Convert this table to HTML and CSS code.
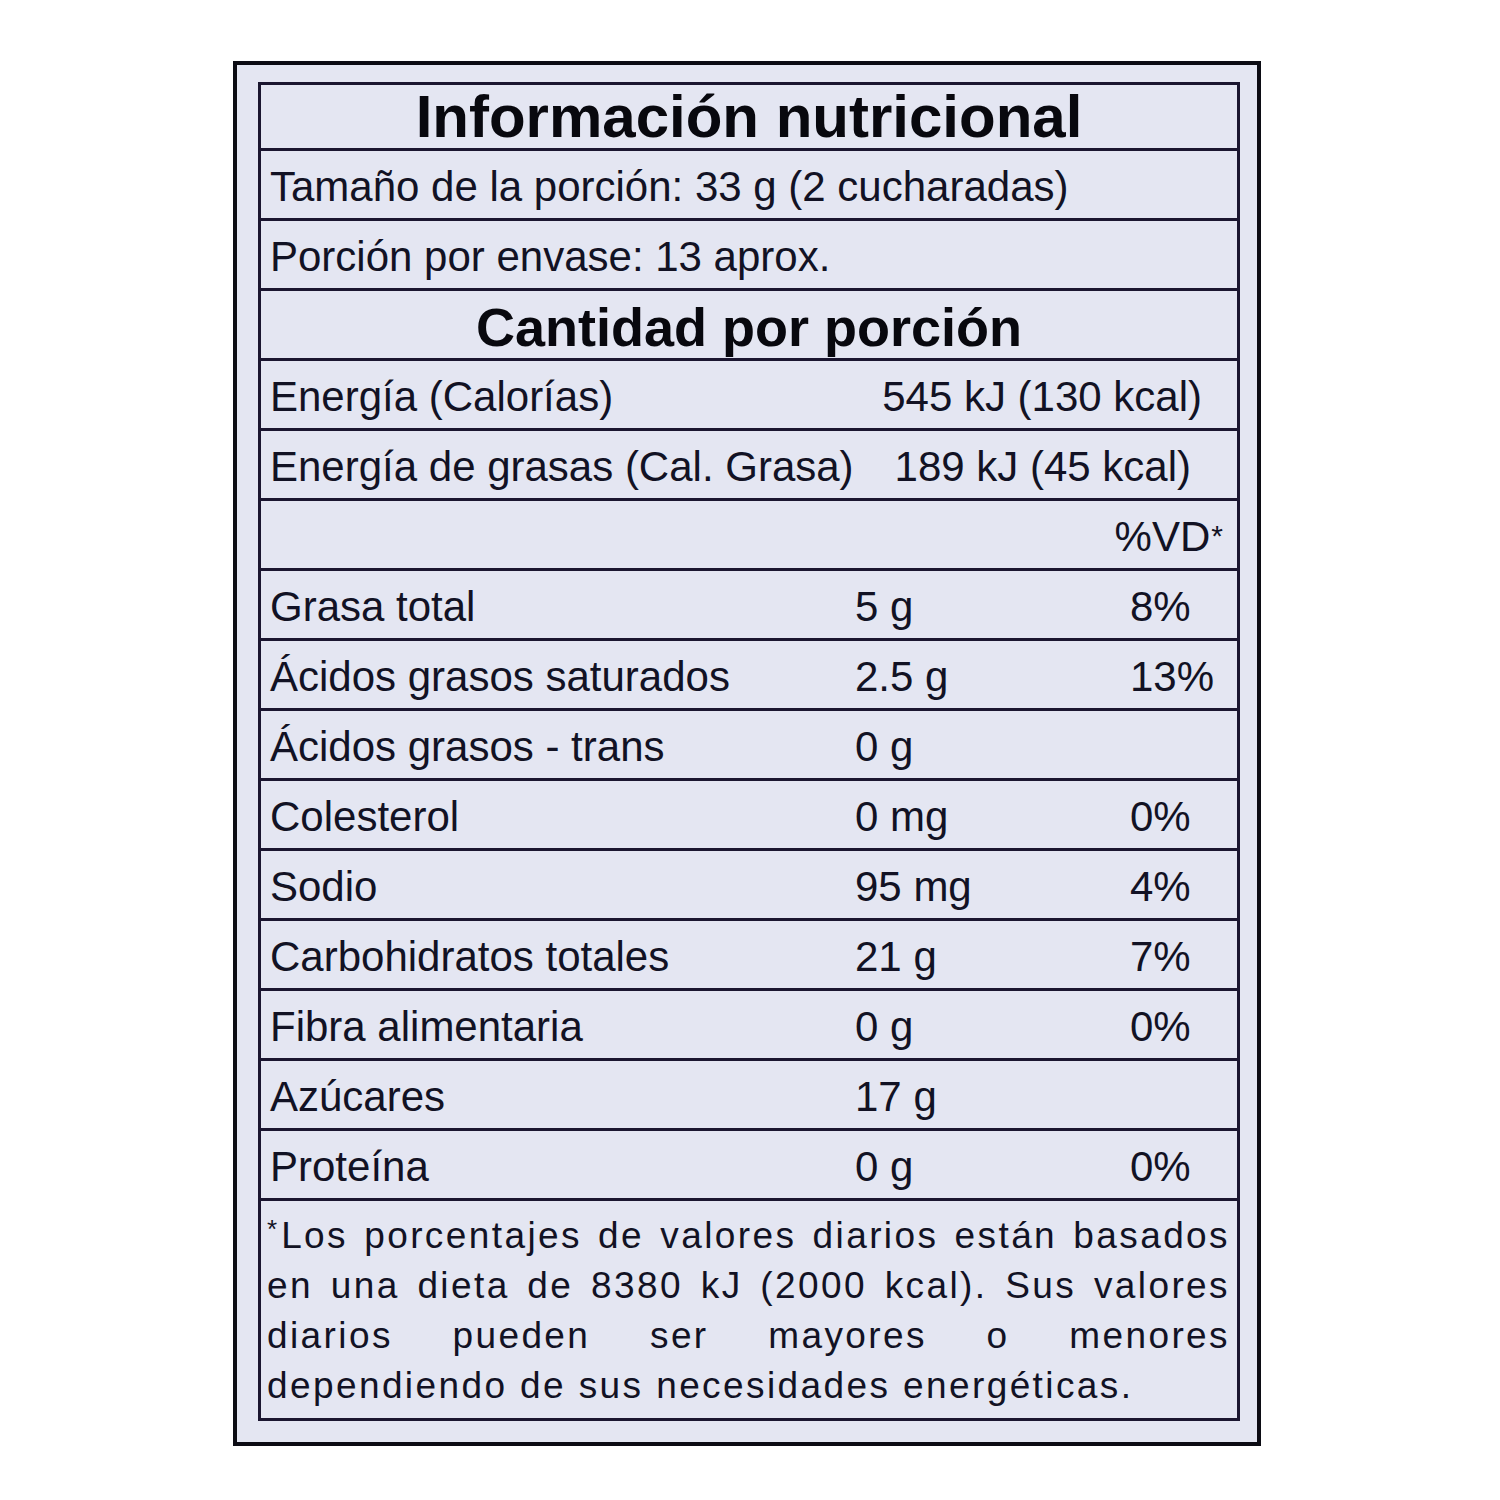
FILE: index.html
```html
<!DOCTYPE html>
<html lang="es">
<head>
<meta charset="utf-8">
<title>Información nutricional</title>
<link rel="stylesheet" href="styles.css">
</head>
<body>
<div class="label">
  <div class="table">
    <div class="row title">Información nutricional</div>
    <div class="row">Tamaño de la porción: 33 g (2 cucharadas)</div>
    <div class="row">Porción por envase: 13 aprox.</div>
    <div class="row sub">Cantidad por porción</div>
    <div class="row split e1"><span>Energía (Calorías)</span><span>545 kJ (130 kcal)</span></div>
    <div class="row split e2"><span>Energía de grasas (Cal. Grasa)</span><span>189 kJ (45 kcal)</span></div>
    <div class="row vd">%VD<span class="ast">*</span></div>
    <div class="row nut"><span>Grasa total</span><span>5 g</span><span>8%</span></div>
    <div class="row nut"><span>Ácidos grasos saturados</span><span>2.5 g</span><span>13%</span></div>
    <div class="row nut"><span>Ácidos grasos - trans</span><span>0 g</span><span></span></div>
    <div class="row nut"><span>Colesterol</span><span>0 mg</span><span>0%</span></div>
    <div class="row nut"><span>Sodio</span><span>95 mg</span><span>4%</span></div>
    <div class="row nut"><span>Carbohidratos totales</span><span>21 g</span><span>7%</span></div>
    <div class="row nut"><span>Fibra alimentaria</span><span>0 g</span><span>0%</span></div>
    <div class="row nut"><span>Azúcares</span><span>17 g</span><span></span></div>
    <div class="row nut"><span>Proteína</span><span>0 g</span><span>0%</span></div>
    <div class="foot">
      <span class="line jl"><span class="ast2">*</span>Los porcentajes de valores diarios están basados</span>
      <span class="line jl">en una dieta de 8380 kJ (2000 kcal). Sus valores</span>
      <span class="line jl">diarios pueden ser mayores o menores</span>
      <span class="line">dependiendo de sus necesidades energéticas.</span>
    </div>
  </div>
</div>
</body>
</html>
```

FILE: styles.css
```css
html, body {
  margin: 0;
  padding: 0;
  background: #ffffff;
}

body {
  font-family: "Liberation Sans", Arial, sans-serif;
  color: #121224;
}

.label {
  width: max-content;
  margin-left: 233px;
  margin-top: 61px;
  border: 4px solid #0c0c14;
  padding: 17px 17px 21px 21px;
  background: #e4e6f2;
}

.table {
  width: 976px;
  border: 3px solid #1b1630;
}

.row {
  height: 63px;
  padding-top: 4px;
  border-bottom: 3px solid #1b1630;
  display: flex;
  align-items: center;
  padding-left: 9px;
  font-size: 42px;
  white-space: nowrap;
}

.row.title {
  height: 66px;
  padding-top: 0;
  justify-content: center;
  padding-left: 0;
  font-size: 60px;
  font-weight: 700;
  color: #08080e;
  box-sizing: border-box;
}

.row.sub {
  justify-content: center;
  padding-left: 0;
  font-size: 54px;
  font-weight: 700;
  color: #08080e;
}

.row.split {
  justify-content: space-between;
}

.row.e1 {
  padding-right: 35px;
}

.row.e2 {
  padding-right: 46px;
}

.row.vd {
  justify-content: flex-end;
  padding-right: 14px;
}

.ast {
  font-size: 30px;
  align-self: flex-start;
  margin-top: 14px;
  margin-left: 1px;
}

.row.nut {
  display: grid;
  grid-template-columns: 585px 275px 1fr;
  align-items: center;
}

.foot {
  padding: 3px 7px 13px 6px;
  height: 201px;
  font-size: 37px;
  letter-spacing: 2.4px;
  line-height: 50px;
}

.line {
  display: block;
  white-space: nowrap;
}

.line.jl {
  text-align: justify;
  text-align-last: justify;
  white-space: normal;
}

.ast2 {
  font-size: 26px;
  vertical-align: 10px;
  letter-spacing: 4px;
}
```
